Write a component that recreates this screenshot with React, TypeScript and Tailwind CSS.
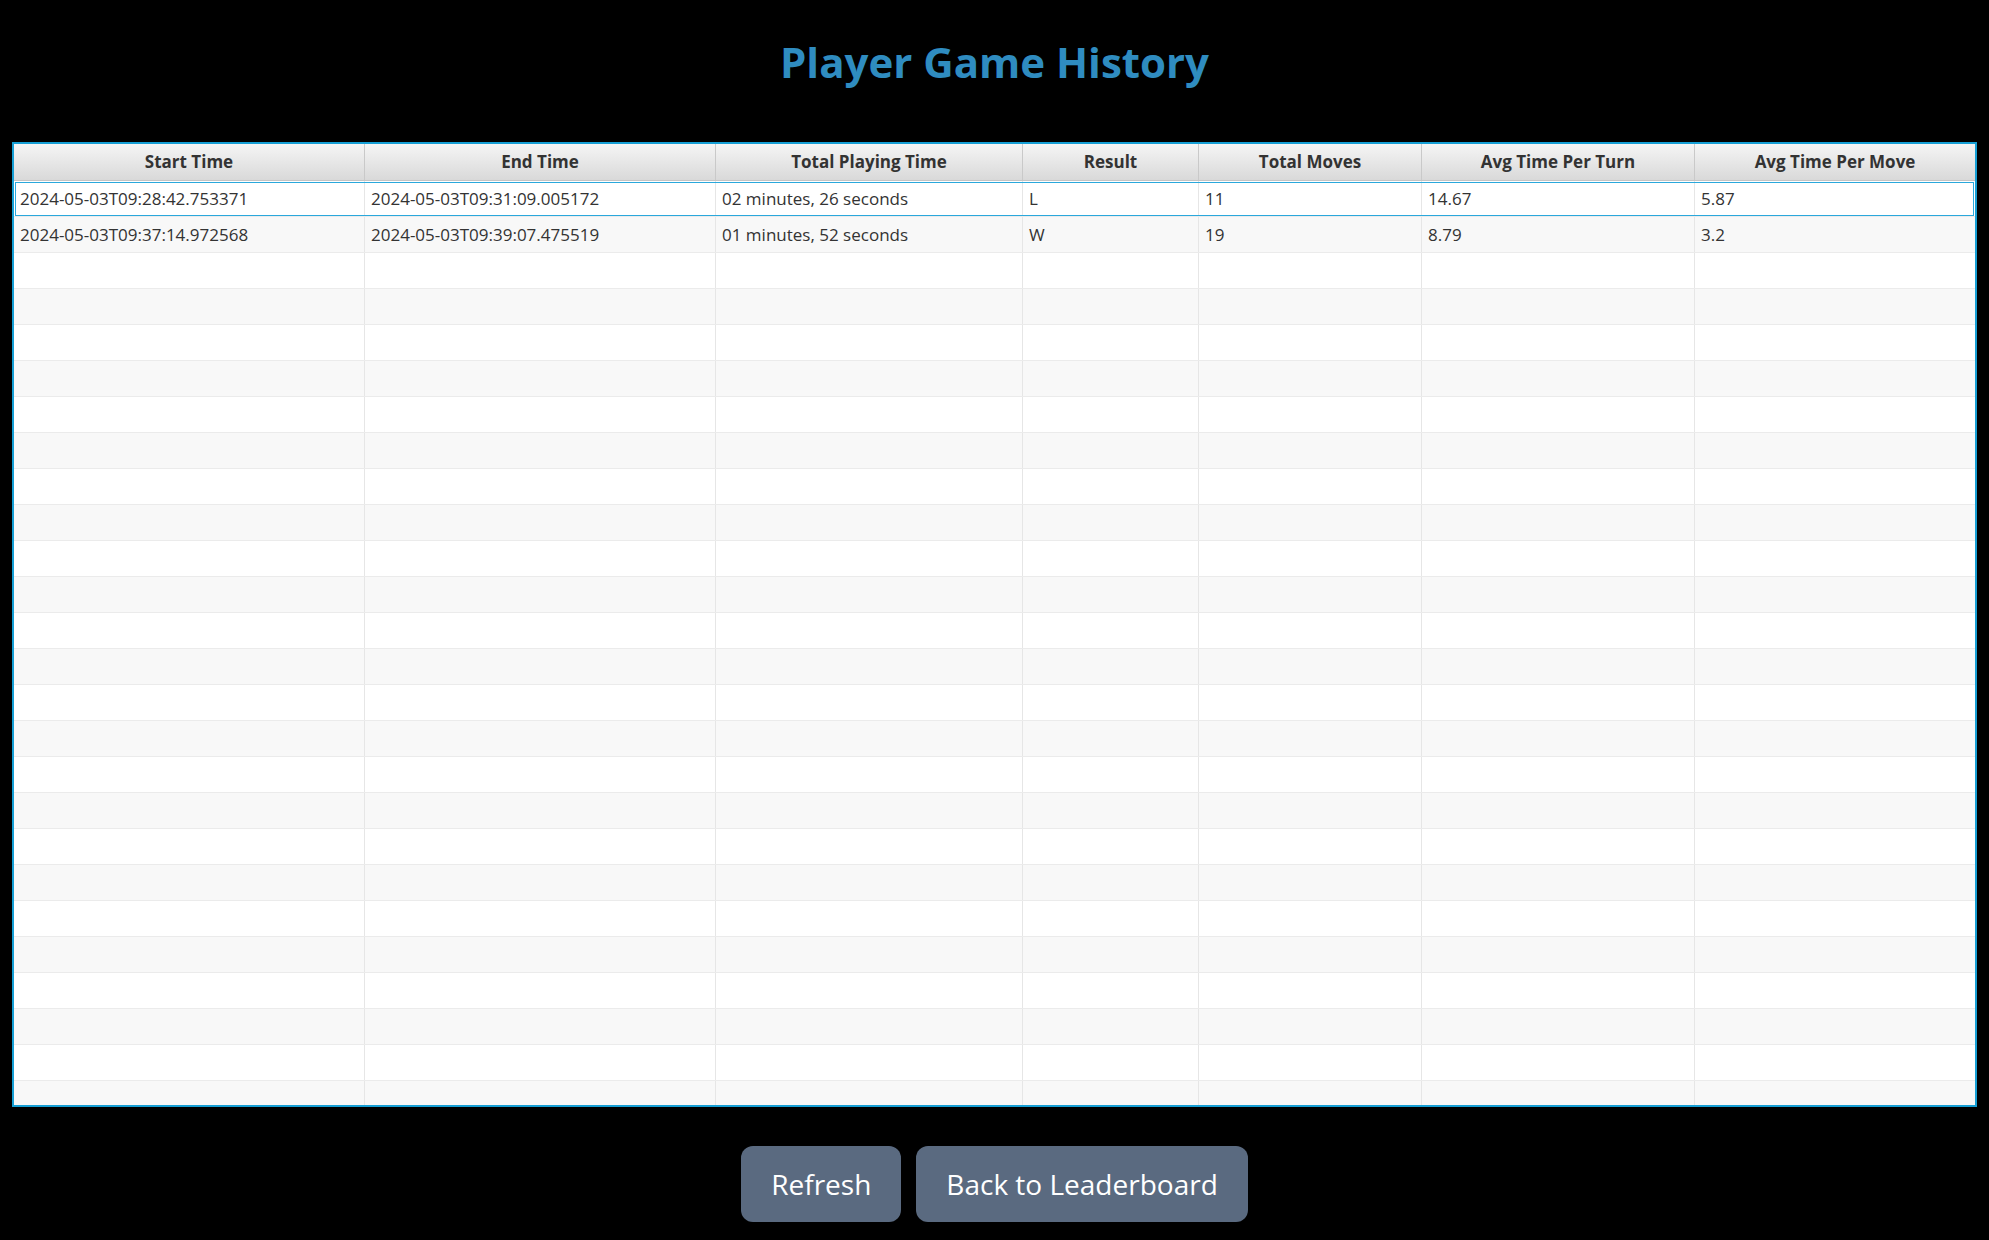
import React from 'react';

// ─── Data ────────────────────────────────────────────────────────────────────

interface GameRow {
  start: string;
  end: string;
  playTime: string;
  result: string;
  moves: string;
  perTurn: string;
  perMove: string;
}

const COLUMNS = [
  'Start Time',
  'End Time',
  'Total Playing Time',
  'Result',
  'Total Moves',
  'Avg Time Per Turn',
  'Avg Time Per Move',
];

const GAMES: GameRow[] = [
  {
    start: '2024-05-03T09:28:42.753371',
    end: '2024-05-03T09:31:09.005172',
    playTime: '02 minutes, 26 seconds',
    result: 'L',
    moves: '11',
    perTurn: '14.67',
    perMove: '5.87',
  },
  {
    start: '2024-05-03T09:37:14.972568',
    end: '2024-05-03T09:39:07.475519',
    playTime: '01 minutes, 52 seconds',
    result: 'W',
    moves: '19',
    perTurn: '8.79',
    perMove: '3.2',
  },
];

// total rows drawn in the body; the last one is cut off by the table edge
const ROW_COUNT = 26;

const GRID = 'grid grid-cols-[351px_351px_307px_176px_223px_273px_280px]';

// ─── App ─────────────────────────────────────────────────────────────────────

export default function App() {
  const rows: (GameRow | null)[] = Array.from({ length: ROW_COUNT }, (_, i) => GAMES[i] ?? null);

  return (
    <div
      className="min-h-[1240px] w-full bg-black flex flex-col items-center"
      style={{ fontFamily: '"Open Sans", "Noto Sans", sans-serif' }}
    >
      <h1 className="mt-[33px] text-[42px] leading-[58px] font-bold text-[#2f8cc0]">
        Player Game History
      </h1>

      {/* Table */}
      <div className="mt-[51px] w-[1965px] h-[965px] border-2 border-[#169fd5] bg-white overflow-hidden flex flex-col">
        <div className={`${GRID} h-[37px] shrink-0 bg-linear-to-b from-[#f5f5f5] to-[#d9d9d9] border-b border-[#c4c4c4]`}>
          {COLUMNS.map((c, i) => (
            <div
              key={c}
              className={`flex items-center justify-center text-[17px] font-bold text-[#333] ${
                i < COLUMNS.length - 1 ? 'border-r border-[#c9c9c9]' : ''
              }`}
            >
              {c}
            </div>
          ))}
        </div>

        <div className="flex-1 overflow-hidden">
          {rows.map((r, i) => {
            const cells = r
              ? [r.start, r.end, r.playTime, r.result, r.moves, r.perTurn, r.perMove]
              : ['', '', '', '', '', '', ''];
            return (
              <div
                key={i}
                className={`${GRID} h-[36px] border-b border-[#ebebeb] ${
                  i % 2 === 0 ? 'bg-white' : 'bg-[#f8f8f8]'
                } ${i === 0 ? 'outline-1 outline-[#2aa8dc] -outline-offset-2' : ''}`}
              >
                {cells.map((v, j) => (
                  <div
                    key={j}
                    className={`flex items-center pl-[6px] text-[17px] text-[#333] ${
                      j < cells.length - 1 ? 'border-r border-[#e6e6e6]' : ''
                    }`}
                  >
                    {v}
                  </div>
                ))}
              </div>
            );
          })}
        </div>
      </div>

      {/* Actions */}
      <div className="mt-[39px] flex gap-[15px]">
        <button
          type="button"
          className="h-[76px] px-[30px] rounded-[12px] bg-[#5a6a80] text-white text-[28px]"
        >
          Refresh
        </button>
        <button
          type="button"
          className="h-[76px] px-[30px] rounded-[12px] bg-[#5a6a80] text-white text-[28px]"
        >
          Back to Leaderboard
        </button>
      </div>
    </div>
  );
}
